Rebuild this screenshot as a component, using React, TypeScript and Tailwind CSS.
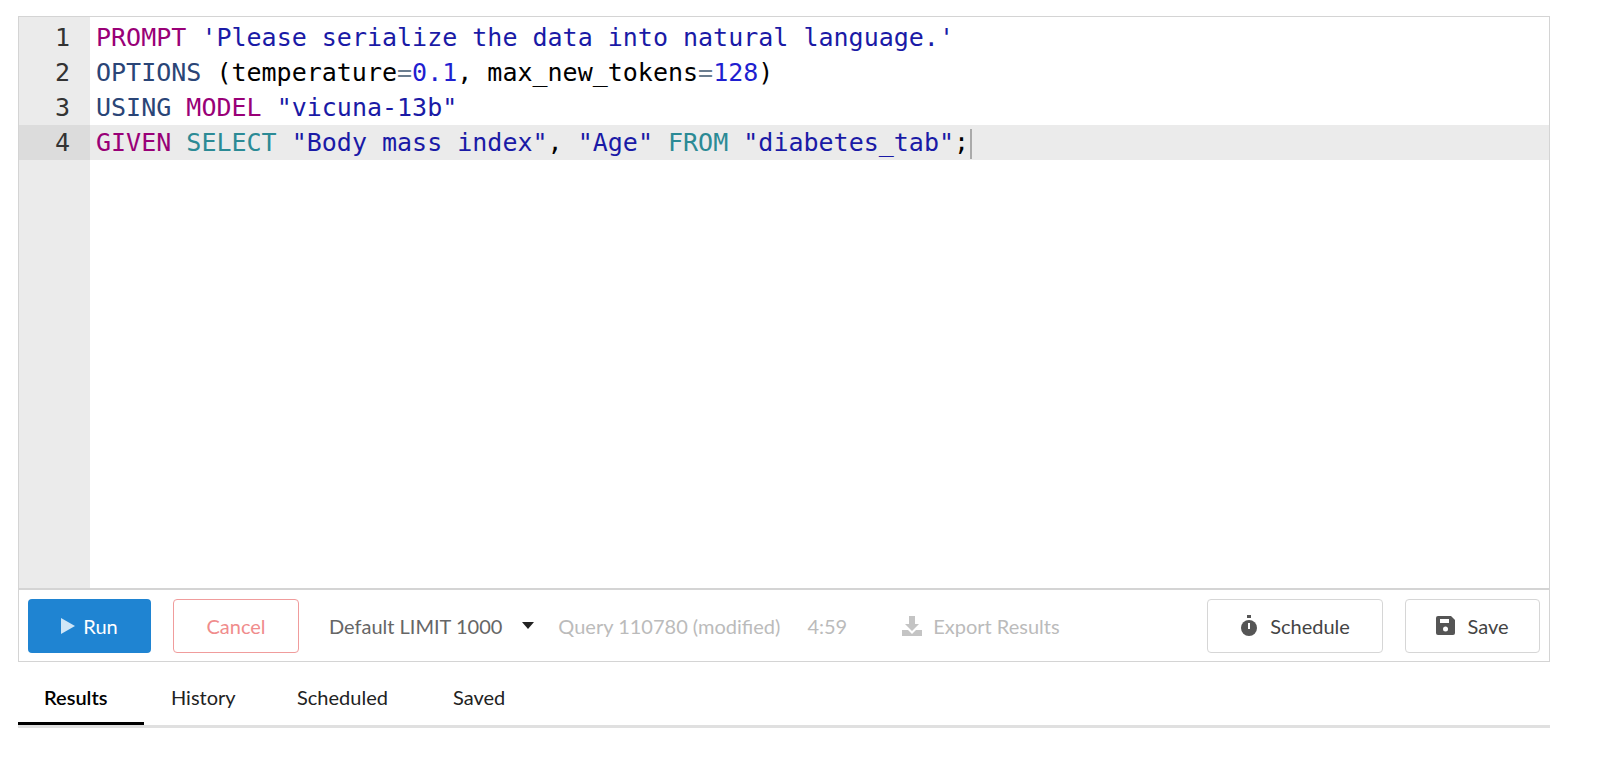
import React from 'react';

const kw = 'text-[#990077]';
const str = 'text-[#1a1aa6]';
const sym = 'text-[#2a4577]';
const fn = 'text-[#2b8a95]';
const num = 'text-[#1f1fd0]';
const op = 'text-[#6b7d8f]';

export default function App() {
  const lines: React.ReactNode[] = [
    <><span className={kw}>PROMPT</span> <span className={str}>'Please serialize the data into natural language.'</span></>,
    <><span className={sym}>OPTIONS</span> (temperature<span className={op}>=</span><span className={num}>0.1</span>, max_new_tokens<span className={op}>=</span><span className={num}>128</span>)</>,
    <><span className={sym}>USING</span> <span className={kw}>MODEL</span> <span className={str}>"vicuna-13b"</span></>,
    <><span className={kw}>GIVEN</span> <span className={fn}>SELECT</span> <span className={str}>"Body mass index"</span>, <span className={str}>"Age"</span> <span className={fn}>FROM</span> <span className={str}>"diabetes_tab"</span>;<span className="inline-block w-[2px] h-[30px] bg-[#aaa] align-middle ml-[1px]" /></>,
  ];
  return (
    <div className="w-[1600px] h-[761px] bg-white pt-4 px-[18px] font-[Lato]">
      <div className="w-[1532px] border border-[#d4d4d4]">
        <div className="flex h-[571px] font-[DejaVu_Sans_Mono] text-[25px] text-black">
          <div className="w-[71px] bg-[#ebebeb] pt-[3px]">
            {lines.map((_, i) => (
              <div key={i} className={`h-[35px] leading-[35px] pr-[20px] text-right text-[#333] ${i === 3 ? 'bg-[#dcdcdc]' : ''}`}>{i + 1}</div>
            ))}
          </div>
          <div className="flex-1 pt-[3px]">
            {lines.map((l, i) => (
              <div key={i} className={`h-[35px] leading-[35px] pl-[6px] whitespace-pre ${i === 3 ? 'bg-[#ebebeb]' : ''}`}>{l}</div>
            ))}
          </div>
        </div>
        <div className="flex items-center h-[73px] border-t-2 border-[#d4d4d4] px-[9px] text-[20px]">
          <button className="flex items-center gap-2 w-[123px] h-[54px] justify-center rounded bg-[#1f84d2] text-white">
            <svg width="14" height="16" viewBox="0 0 14 16"><path d="M0 0 L14 8 L0 16Z" fill="#cfe6f7" /></svg>Run
          </button>
          <button className="ml-[22px] w-[126px] h-[54px] rounded border border-[#f09c9c] text-[#f08c8c]">Cancel</button>
          <span className="ml-[30px] text-[#666]">Default LIMIT 1000</span>
          <svg className="ml-[20px]" width="12" height="7" viewBox="0 0 12 7"><path d="M0 0H12L6 7Z" fill="#222" /></svg>
          <span className="ml-[24px] text-[#bbb]">Query 110780 (modified)</span>
          <span className="ml-[27px] text-[#bbb]">4:59</span>
          <span className="ml-[54px] flex items-center gap-[10px] text-[#bbb]">
            <svg width="22" height="22" viewBox="0 0 22 22" fill="#c4c4c4"><path d="M8 1h6v8h4l-7 7-7-7h4z" /><path d="M1 15h6l4 4 4-4h6v6H1z" /></svg>
            Export Results
          </span>
          <button className="ml-auto flex items-center justify-center gap-3 w-[176px] h-[54px] rounded border border-[#d6d6d6] text-[#444]">
            <svg width="18" height="22" viewBox="0 0 18 22" fill="#555"><rect x="7" y="0" width="4" height="3" /><circle cx="9" cy="13" r="8" /><rect x="8" y="8" width="2" height="6" fill="#fff" /></svg>
            Schedule
          </button>
          <button className="ml-[22px] flex items-center justify-center gap-3 w-[135px] h-[54px] rounded border border-[#d6d6d6] text-[#444]">
            <svg width="19" height="19" viewBox="0 0 19 19" fill="#555"><path d="M2 0h13l4 4v13a2 2 0 0 1-2 2H2a2 2 0 0 1-2-2V2a2 2 0 0 1 2-2z" /><rect x="4" y="3" width="9" height="4" fill="#fff" /><circle cx="9.5" cy="13" r="2.5" fill="#fff" /></svg>
            Save
          </button>
        </div>
      </div>
      <div className="flex w-[1532px] mt-[14px] border-b-[3px] border-[#e0e0e0] text-[20px] text-[#222]">
        {['Results', 'History', 'Scheduled', 'Saved'].map((t, i) => (
          <div key={t} className={`h-[49px] flex items-start pt-[6px] ${i === 0 ? 'w-[126px] pl-[26px] font-semibold text-black border-b-[3px] border-black -mb-[3px]' : i === 1 ? 'w-[127px] pl-[27px]' : i === 2 ? 'w-[182px] pl-[26px]' : 'pl-[0px]'}`}>{t}</div>
        ))}
      </div>
    </div>
  );
}
